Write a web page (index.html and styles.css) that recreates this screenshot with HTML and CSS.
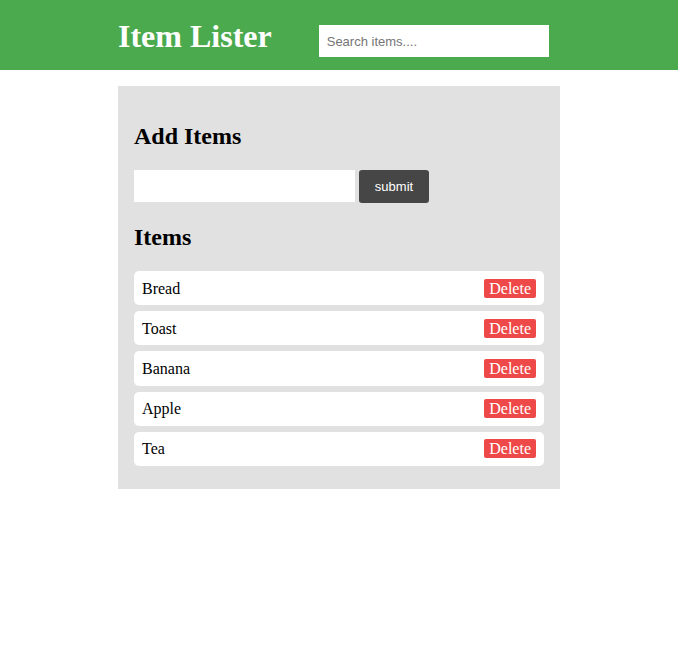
FILE: index.html
```html
<!DOCTYPE html>
<html>
<head>
<meta charset="utf-8">
<title>Item Lister</title>
<link rel="stylesheet" href="styles.css">
</head>
<body>
<header class="header">
  <div class="header-inner">
    <h1 class="title">Item Lister</h1>
    <input class="search" type="text" placeholder="Search items....">
  </div>
</header>
<main class="card">
  <h2 class="heading">Add Items</h2>
  <form class="add-form">
    <input class="add-input" type="text">
    <button class="submit-btn" type="button">submit</button>
  </form>
  <h2 class="heading">Items</h2>
  <ul class="items">
    <li class="item"><span>Bread</span><button class="delete-btn" type="button">Delete</button></li>
    <li class="item"><span>Toast</span><button class="delete-btn" type="button">Delete</button></li>
    <li class="item"><span>Banana</span><button class="delete-btn" type="button">Delete</button></li>
    <li class="item"><span>Apple</span><button class="delete-btn" type="button">Delete</button></li>
    <li class="item"><span>Tea</span><button class="delete-btn" type="button">Delete</button></li>
  </ul>
</main>
</body>
</html>
```
FILE: styles.css
```css
* { box-sizing: border-box; }
body {
  margin: 0;
  font-family: "Liberation Serif", "Times New Roman", serif;
  font-size: 16px;
  color: #000;
  background: #fff;
}
.header {
  background: #4caa4e;
  height: 70px;
}
.header-inner {
  width: 442px;
  margin: 0 auto;
  display: flex;
  align-items: flex-start;
  gap: 47px;
  padding-top: 18px;
}
.title {
  margin: 0;
  font-size: 32px;
  font-weight: bold;
  color: #fff;
  line-height: 36px;
}
.search {
  margin-top: 7px;
  width: 230px;
  height: 32px;
  border: none;
  outline: none;
  padding: 0 8px;
  font-family: "Liberation Sans", Arial, sans-serif;
  font-size: 13px;
  background: #fff;
}
.search::placeholder { color: #757575; }
.card {
  width: 442px;
  margin: 16px auto 0;
  background: #e1e1e1;
  padding: 16px 16px 17px;
}
.heading {
  font-size: 24px;
  font-weight: bold;
  line-height: 28px;
  margin: 20px 0;
}
.add-form {
  display: flex;
  gap: 4px;
  align-items: flex-start;
}
.add-input {
  width: 221px;
  height: 32px;
  border: none;
  outline: none;
  background: #fff;
  padding: 0 6px;
}
.submit-btn {
  width: 70px;
  height: 33px;
  border: none;
  border-radius: 3px;
  background: #464646;
  color: #fff;
  font-family: "Liberation Sans", Arial, sans-serif;
  font-size: 13px;
}
.items {
  list-style: none;
  margin: 0;
  padding: 0;
}
.item {
  display: flex;
  justify-content: space-between;
  align-items: center;
  background: #fff;
  border-radius: 5px;
  padding: 7.6px 8px;
  margin-bottom: 6px;
  line-height: 18px;
}
.item span {
  padding-top: 1px;
}
.delete-btn {
  background: #ee4848;
  color: #fff;
  border: none;
  border-radius: 2px;
  font-family: "Liberation Serif", "Times New Roman", serif;
  font-size: 16px;
  line-height: 19px;
  height: 19px;
  padding: 0 5px;
}
```
